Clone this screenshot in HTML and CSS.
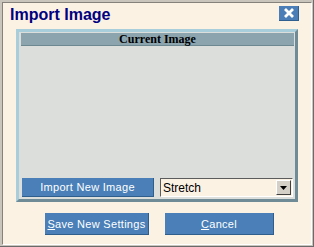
FILE: index.html
```html
<!DOCTYPE html>
<html>
<head>
<link rel="stylesheet" href="styles.css">
</head>
<body>

<div class="window">
  <div class="dialog">
    <div class="titlebar">
      <span class="title">Import Image</span>
      <button class="close">
        <svg width="12" height="10" viewBox="0 0 12 10"><path d="M2 1 L10 9 M10 1 L2 9" stroke="#fff" stroke-width="2.8"/></svg>
      </button>
    </div>

    <div class="panel">
      <div class="panel-head">Current Image</div>
      <div class="preview"></div>
      <div class="panel-row">
        <button class="btn btn-import">Import New Image</button>
        <div class="select">
          <span class="select-value">Stretch</span>
          <span class="select-arrow">
            <svg width="7" height="4" viewBox="0 0 7 4"><path d="M0 0 H7 L3.5 4 Z" fill="#000"/></svg>
          </span>
        </div>
      </div>
    </div>

    <div class="actions">
      <button class="btn btn-save"><u>S</u>ave New Settings</button>
      <button class="btn btn-cancel"><u>C</u>ancel</button>
    </div>
  </div>
</div>

</body>
</html>
```

FILE: styles.css
```css
body {
  margin: 0;
  font-family: "Liberation Sans", Arial, sans-serif;
}

.window {
  width: 314px;
  height: 247px;
  box-sizing: border-box;
  background: #c9c5bd;
  border-right: 1px solid #6a6a6a;
  border-bottom: 1px solid #6a6a6a;
  padding: 2px 1px 1px 2px;
}

.dialog {
  height: 100%;
  box-sizing: border-box;
  background: #fcf2e4;
  border-top: 1px solid #85827c;
  border-left: 1px solid #85827c;
  border-right: 1px solid #ffffff;
  border-bottom: 1px solid #ffffff;
}

.titlebar {
  height: 26px;
  display: flex;
  align-items: flex-start;
  justify-content: space-between;
  padding: 0 12px 0 7px;
}

.title {
  color: #000080;
  font-weight: bold;
  font-size: 16px;
  line-height: 16px;
  margin-top: 4px;
}

.close {
  width: 20px;
  height: 15px;
  margin-top: 3px;
  padding: 0;
  border: none;
  border-right: 1px solid #2f5f8f;
  border-bottom: 1px solid #2f5f8f;
  background: #4b7eb6;
  display: flex;
  align-items: center;
  justify-content: center;
}

.panel {
  margin-left: 13px;
  width: 282px;
  height: 173px;
  box-sizing: border-box;
  border: 3px solid;
  border-color: #a8cddb #6f8b95 #6f8b95 #a8cddb;
  background: #dcdedb;
  display: flex;
  flex-direction: column;
}

.panel-head {
  margin: 1px 1px 0 2px;
  height: 12px;
  background: #8ba4ae;
  border-bottom: 1px solid #6e8891;
  text-align: center;
  font-family: "Liberation Serif", "Times New Roman", serif;
  font-weight: bold;
  font-size: 12px;
  line-height: 12px;
  color: #000;
}

.preview {
  flex: 1;
}

.panel-row {
  display: flex;
  gap: 6px;
  padding: 0 2px 2px 3px;
}

.btn {
  border: none;
  background: #4a80b7;
  color: #fff;
  font-family: "Liberation Sans", Arial, sans-serif;
  font-size: 11px;
  letter-spacing: 0.3px;
  padding: 0;
  border-right: 1px solid #2f5d8c;
  border-bottom: 1px solid #2f5d8c;
}

.btn-import {
  width: 132px;
  height: 19px;
}

.select {
  width: 133px;
  height: 19px;
  box-sizing: border-box;
  border: 1px solid;
  border-color: #5c5c5c #ffffff #ffffff #5c5c5c;
  background: #fcf2e4;
  display: flex;
  align-items: center;
  justify-content: space-between;
  padding: 0 1px 0 2px;
  font-size: 12px;
}

.select-arrow {
  width: 15px;
  height: 15px;
  box-sizing: border-box;
  background: #d4d0c8;
  border: 1px solid;
  border-color: #ffffff #404040 #404040 #ffffff;
  display: flex;
  align-items: center;
  justify-content: center;
}

.actions {
  display: flex;
  gap: 16px;
  padding: 11px 0 0 42px;
}

.btn-save {
  width: 104px;
  height: 22px;
}

.btn-cancel {
  width: 109px;
  height: 22px;
}
```
